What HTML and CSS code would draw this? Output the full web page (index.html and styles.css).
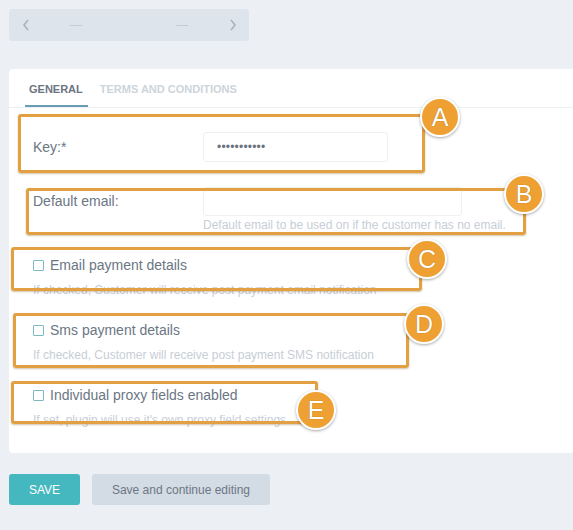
FILE: index.html
```html
<!DOCTYPE html>
<html>
<head>
<meta charset="utf-8">
<link rel="stylesheet" href="styles.css">
</head>
<body>
<div class="pager">
  <svg class="chev" width="8" height="12" viewBox="0 0 8 12"><path d="M6 1 L2 6 L6 11" fill="none" stroke="#a9b3be" stroke-width="1.6"/></svg>
  <span class="dash"></span>
  <span class="dash"></span>
  <svg class="chev" width="8" height="12" viewBox="0 0 8 12"><path d="M2 1 L6 6 L2 11" fill="none" stroke="#a9b3be" stroke-width="1.6"/></svg>
</div>

<div class="card">
  <div class="tabs">
    <div class="tab active">GENERAL</div>
    <div class="tab">TERMS AND CONDITIONS</div>
  </div>
  <div class="form">
    <div class="row key-row">
      <div class="label">Key:*</div>
      <div class="input key-input">•••••••••••</div>
    </div>
    <div class="row email-row">
      <div class="label label-top">Default email:</div>
      <div class="field">
        <div class="input email-input"></div>
        <div class="help">Default email to be used on if the customer has no email.</div>
      </div>
    </div>
    <div class="check-group">
      <div class="check"><span class="box"></span>Email payment details</div>
      <div class="help">If checked, Customer will receive post payment email notification</div>
    </div>
    <div class="check-group">
      <div class="check"><span class="box"></span>Sms payment details</div>
      <div class="help">If checked, Customer will receive post payment SMS notification</div>
    </div>
    <div class="check-group">
      <div class="check"><span class="box"></span>Individual proxy fields enabled</div>
      <div class="help">If set, plugin will use it's own proxy field settings</div>
    </div>
  </div>
</div>

<div class="actions">
  <button class="btn save">SAVE</button>
  <button class="btn cont">Save and continue editing</button>
</div>

<div class="ann ann-a"></div><div class="bubble b-a">A</div>
<div class="ann ann-b"></div><div class="bubble b-b">B</div>
<div class="ann ann-c"></div><div class="bubble b-c">C</div>
<div class="ann ann-d"></div><div class="bubble b-d">D</div>
<div class="ann ann-e"></div><div class="bubble b-e">E</div>
</body>
</html>
```
FILE: styles.css
```css
html, body {
  margin: 0;
  padding: 0;
}
body {
  background: #ecf0f4;
  font-family: "Liberation Sans", Arial, sans-serif;
  color: #6b7684;
  padding: 9px 0 0 9px;
  width: 564px;
  height: 521px;
  overflow: hidden;
  position: relative;
}
.pager {
  width: 240px;
  height: 32px;
  background: #dde4ec;
  border-radius: 3px;
  display: flex;
  align-items: center;
  padding: 0 12px 0 13px;
  box-sizing: border-box;
}
.pager .dash {
  width: 12px;
  height: 1px;
  background: #c3cbd4;
  margin-left: 40px;
}
.pager .dash + .dash {
  margin-left: 94px;
}
.pager .chev:last-child {
  margin-left: auto;
}
.card {
  margin-top: 28px;
  background: #fff;
  border-radius: 4px 0 0 4px;
  height: 384px;
}
.tabs {
  display: flex;
  height: 38px;
  border-bottom: 1px solid #edf0f3;
  padding-left: 16px;
  gap: 12px;
}
.tab {
  font-size: 11px;
  font-weight: bold;
  color: #cdd4db;
  line-height: 40px;
  height: 38px;
  box-sizing: border-box;
}
.tab.active {
  color: #6b7582;
  border-bottom: 2px solid #6a9db3;
  padding: 0 5px 0 4px;
}
.form {
  padding: 24px 0 0 24px;
}
.row {
  display: flex;
}
.label {
  width: 170px;
  font-size: 14px;
  line-height: 31px;
}
.label-top {
  line-height: 16px;
  padding-top: 6px;
}
.input {
  border: 1px solid #eef1f4;
  border-radius: 3px;
  box-sizing: border-box;
  height: 30px;
}
.key-input {
  width: 185px;
  font-size: 12px;
  line-height: 28px;
  padding-left: 13px;
  color: #6a7480;
  letter-spacing: 0.2px;
}
.email-row {
  margin-top: 24px;
}
.email-input {
  width: 259px;
  height: 29px;
}
.help {
  font-size: 12px;
  line-height: 14px;
  color: #c7ced6;
  margin-top: 2px;
}
.check-group {
  margin-top: 24px;
}
.check {
  display: flex;
  align-items: center;
  font-size: 14px;
  line-height: 19px;
  color: #6b7684;
}
.check .box {
  width: 9px;
  height: 9px;
  border: 1px solid #7db9c1;
  border-radius: 1px;
  margin-right: 6px;
}
.check-group .help {
  margin-top: 8px;
}
.actions {
  display: flex;
  gap: 12px;
  margin-top: 21px;
}
.btn {
  height: 31px;
  border: none;
  border-radius: 3px;
  font-family: "Liberation Sans", Arial, sans-serif;
  font-size: 12px;
  padding: 0;
}
.save {
  width: 71px;
  background: #45b7bf;
  color: #fff;
}
.cont {
  width: 178px;
  background: #d3dbe4;
  color: #6d7785;
}
.ann {
  position: absolute;
  border: 3px solid #e2a043;
  border-radius: 3px;
  box-sizing: border-box;
  box-shadow: 0 1px 2px rgba(120, 80, 20, 0.35);
}
.ann-a { left: 18px; top: 114px; width: 407px; height: 59px; }
.ann-b { left: 26px; top: 188px; width: 500px; height: 47px; }
.ann-c { left: 11px; top: 247px; width: 411px; height: 44px; }
.ann-d { left: 13px; top: 313px; width: 396px; height: 55px; }
.ann-e { left: 11px; top: 381px; width: 307px; height: 43px; }
.bubble {
  position: absolute;
  width: 36px;
  height: 36px;
  border-radius: 50%;
  background: #efa033;
  border: 2px solid #fff;
  box-shadow: 0 1px 3px rgba(0, 0, 0, 0.35);
  color: #fff;
  font-size: 25px;
  line-height: 37px;
  text-align: center;
  font-family: "Liberation Sans", Arial, sans-serif;
  text-shadow: 0 0 1px rgba(0,0,0,0.4);
}
.b-a { left: 420px; top: 97px; }
.b-b { left: 504px; top: 174px; }
.b-c { left: 407px; top: 239px; }
.b-d { left: 404px; top: 304px; }
.b-e { left: 296px; top: 390px; }
```
